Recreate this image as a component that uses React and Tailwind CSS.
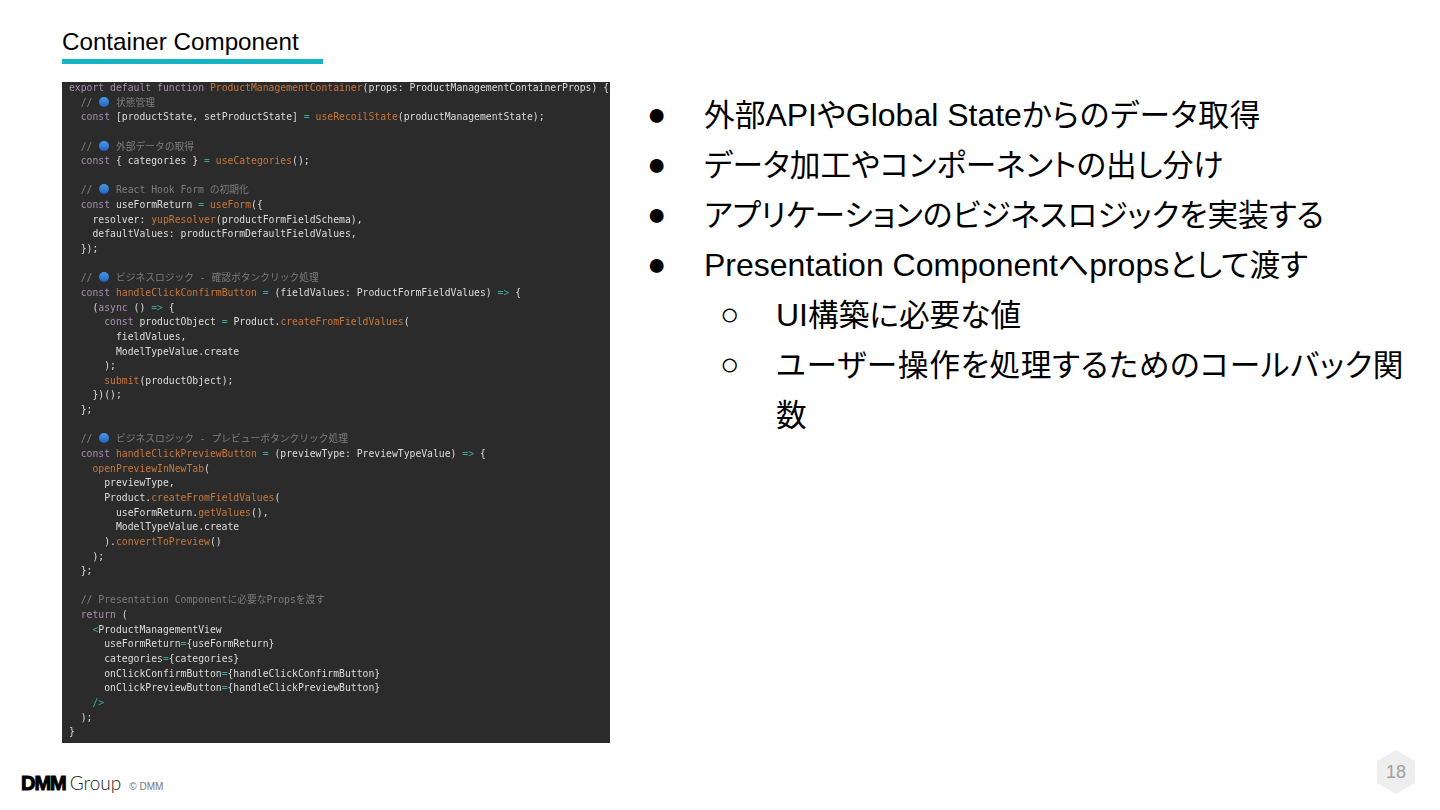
const kw = "text-[#a78fb0]";
const fn = "text-[#c8773c]";
const op = "text-[#3fa7a0]";
const cm = "text-[#7d7d7d]";

const Dot = () => (
    <span className="inline-block w-[11.7px] h-[10px] align-[-1px] text-center">
        <span className="inline-block w-[10px] h-[10px] rounded-full bg-gradient-to-b from-[#4a9be8] to-[#1f62c4]" />
    </span>
);

// 1行 = [テキスト, 色] の配列
const codeLines = [
    [["export default function ", kw], ["ProductManagementContainer", fn], ["(props: ProductManagementContainerProps) {"]],
    [["  // ", cm], ["dot"], [" 状態管理", cm]],
    [["  "], ["const ", kw], ["[productState, setProductState] "], ["= ", op], ["useRecoilState", fn], ["(productManagementState);"]],
    [],
    [["  // ", cm], ["dot"], [" 外部データの取得", cm]],
    [["  "], ["const ", kw], ["{ categories } "], ["= ", op], ["useCategories", fn], ["();"]],
    [],
    [["  // ", cm], ["dot"], [" React Hook Form の初期化", cm]],
    [["  "], ["const ", kw], ["useFormReturn "], ["= ", op], ["useForm", fn], ["({"]],
    [["    resolver: "], ["yupResolver", fn], ["(productFormFieldSchema),"]],
    [["    defaultValues: productFormDefaultFieldValues,"]],
    [["  });"]],
    [],
    [["  // ", cm], ["dot"], [" ビジネスロジック - 確認ボタンクリック処理", cm]],
    [["  "], ["const ", kw], ["handleClickConfirmButton", fn], [" "], ["= ", op], ["(fieldValues: ProductFormFieldValues) "], ["=> ", op], ["{"]],
    [["    ("], ["async ", kw], ["() "], ["=> ", op], ["{"]],
    [["      "], ["const ", kw], ["productObject "], ["= ", op], ["Product."], ["createFromFieldValues", fn], ["("]],
    [["        fieldValues,"]],
    [["        ModelTypeValue.create"]],
    [["      );"]],
    [["      "], ["submit", fn], ["(productObject);"]],
    [["    })();"]],
    [["  };"]],
    [],
    [["  // ", cm], ["dot"], [" ビジネスロジック - プレビューボタンクリック処理", cm]],
    [["  "], ["const ", kw], ["handleClickPreviewButton", fn], [" "], ["= ", op], ["(previewType: PreviewTypeValue) "], ["=> ", op], ["{"]],
    [["    "], ["openPreviewInNewTab", fn], ["("]],
    [["      previewType,"]],
    [["      Product."], ["createFromFieldValues", fn], ["("]],
    [["        useFormReturn."], ["getValues", fn], ["(),"]],
    [["        ModelTypeValue.create"]],
    [["      )."], ["convertToPreview", fn], ["()"]],
    [["    );"]],
    [["  };"]],
    [],
    [["  // Presentation Componentに必要なPropsを渡す", cm]],
    [["  "], ["return ", kw], ["("]],
    [["    "], ["<", op], ["ProductManagementView"]],
    [["      useFormReturn"], ["=", op], ["{useFormReturn}"]],
    [["      categories"], ["=", op], ["{categories}"]],
    [["      onClickConfirmButton"], ["=", op], ["{handleClickConfirmButton}"]],
    [["      onClickPreviewButton"], ["=", op], ["{handleClickPreviewButton}"]],
    [["    "], ["/>", op]],
    [["  );"]],
    [["}"]],
];

const CodeLine = ({ parts }) => (
    <div className="h-[14.65px]">
        {parts.map(([text, color], i) =>
            text === "dot" ? <Dot key={i} /> : <span key={i} className={color}>{text}</span>
        )}
    </div>
);

// 欧文だけ少し大きい
const L = ({ children }) => <span className="text-[32px] leading-none">{children}</span>;

const Bullet = ({ glyph, children, sub }) => (
    <li className={sub ? "flex pl-[72px]" : "flex"}>
        <span className={sub ? "w-[55px] shrink-0 -ml-[1px] mr-[1px] -mt-[2px] text-[32px]" : "w-[55px] shrink-0 -ml-[2px] mr-[2px] -mt-[2px] text-[32px]"}>{glyph}</span>
        <span>{children}</span>
    </li>
);

export default function App() {
    return (
        <div className="w-[1440px] h-[810px] bg-white flex flex-col overflow-hidden font-['Liberation_Sans','Noto_Sans_CJK_JP',sans-serif] text-black">
            {/* タイトル */}
            <header className="pl-[62px] pt-[27px]">
                <h1 className="text-[24.2px] leading-[30px] w-[261px] h-[37px] border-b-[5px] border-[#17b3c9]">
                    Container Component
                </h1>
            </header>

            <main className="flex flex-1 pl-[62px] pt-[18px]">
                {/* コード画像 */}
                <div className="w-[548px] h-[661px] shrink-0 bg-[#2b2b2b] overflow-hidden pl-[7px]">
                    <pre className="-mt-[1px] blur-[0.45px] text-[#dcdcdc] text-[9.75px] leading-[14.65px] font-['DejaVu_Sans_Mono','Noto_Sans_CJK_JP',monospace]">
                        {codeLines.map((parts, i) => <CodeLine key={i} parts={parts} />)}
                    </pre>
                </div>

                {/* 箇条書き */}
                <ul className="w-[800px] pl-[39px] pt-[9px] text-[30.7px] leading-[50px] [font-feature-settings:'palt']">
                    <Bullet glyph="●">外部<L>API</L>や<L>Global State</L><span className="tracking-[0.8px]">からのデータ取得</span></Bullet>
                    <Bullet glyph="●">データ加工やコンポーネントの出し分け</Bullet>
                    <Bullet glyph="●">アプリケーションのビジネスロジックを実装する</Bullet>
                    <Bullet glyph="●"><L>Presentation Component</L>へ<L>props</L>として渡す</Bullet>
                    <Bullet glyph="○" sub><L>UI</L>構築に必要な値</Bullet>
                    <Bullet glyph="○" sub><span className="tracking-[0.65px]">ユーザー操作を処理するためのコールバック関数</span></Bullet>
                </ul>
            </main>

            {/* フッター */}
            <footer className="flex items-start justify-between h-[60px] pl-[21px] pr-[25px]">
                <div className="flex items-baseline mt-[23px]">
                    <span className="text-[20px] leading-[20px] font-bold tracking-[-1px] [-webkit-text-stroke:1px_black]">DMM</span>
                    <span className="ml-[4px] text-[19px] leading-[20px] font-light text-[#222222] font-['Lato',sans-serif]">Group</span>
                    <span className="ml-[8px] text-[10px] text-[#777777]">© DMM</span>
                </div>
                <div className="w-[38px] h-[44px] bg-[#eeeeee] flex items-center justify-center text-[18px] text-[#a0a0a0] [clip-path:polygon(50%_0,100%_25%,100%_75%,50%_100%,0_75%,0_25%)]">
                    18
                </div>
            </footer>
        </div>
    );
}
